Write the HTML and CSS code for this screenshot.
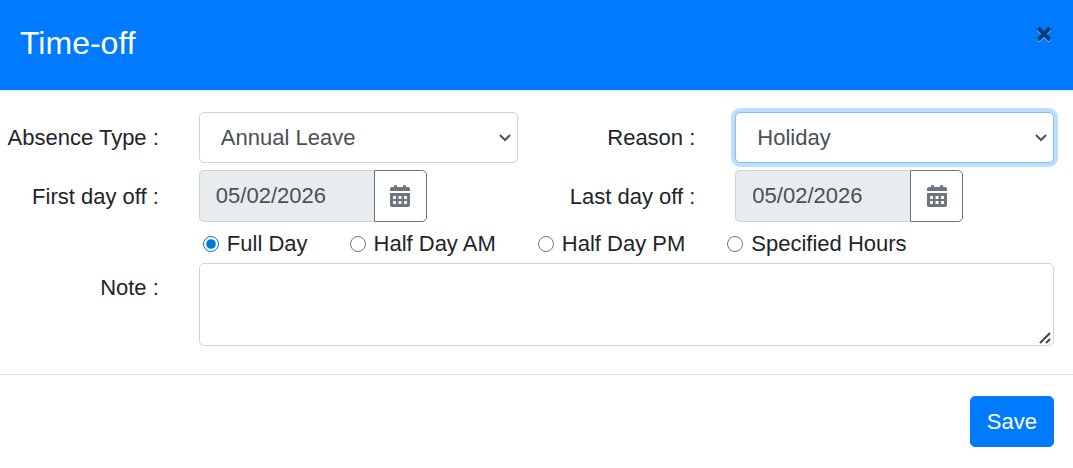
FILE: index.html
```
<!DOCTYPE html>
<html lang="en">
<head>
  <meta charset="UTF-8" />
  <meta name="viewport" content="width=device-width, initial-scale=1.0"/>
  <title>Time-off</title>
  <link rel="stylesheet" href="styles.css">
</head>
<body>

  <form class="modal-content">
    <header class="modal-header">
      <h1 class="modal-title">Time-off</h1>
      <button type="button" class="close" aria-label="Close">
        <svg class="close-icon" viewBox="0 0 18 18" aria-hidden="true">
          <path d="M3 3 15 15M15 3 3 15" />
        </svg>
      </button>
    </header>

    <div class="modal-body">
      <label class="form-label" for="absenceType">Absence Type :</label>
      <div class="form-field">
        <select class="form-control" id="absenceType">
          <option selected>Annual Leave</option>
        </select>
      </div>

      <label class="form-label" for="reason">Reason :</label>
      <div class="form-field">
        <select class="form-control" id="reason" autofocus>
          <option selected>Holiday</option>
        </select>
      </div>

      <label class="form-label" for="firstDay">First day off :</label>
      <div class="form-field date-group">
        <input type="text" class="form-control" id="firstDay" value="05/02/2026" readonly>
        <button type="button" class="date-btn" aria-label="Choose first day">
          <svg class="date-icon" viewBox="0 0 20 22" aria-hidden="true">
            <path fill-rule="evenodd" d="M4 1a1 1 0 0 1 1-1h1a1 1 0 0 1 1 1v1h6V1a1 1 0 0 1 1-1h1a1 1 0 0 1 1 1v1h2a2 2 0 0 1 2 2v2H0V4a2 2 0 0 1 2-2h2zM0 8h20v12a2 2 0 0 1-2 2H2a2 2 0 0 1-2-2zM3 11v3h3v-3zM8.500 11v3h3v-3zM14 11v3h3v-3zM3 16v3h3v-3zM8.500 16v3h3v-3zM14 16v3h3v-3z" />
          </svg>
        </button>
      </div>

      <label class="form-label" for="lastDay">Last day off :</label>
      <div class="form-field date-group">
        <input type="text" class="form-control" id="lastDay" value="05/02/2026" readonly>
        <button type="button" class="date-btn" aria-label="Choose last day">
          <svg class="date-icon" viewBox="0 0 20 22" aria-hidden="true">
            <path fill-rule="evenodd" d="M4 1a1 1 0 0 1 1-1h1a1 1 0 0 1 1 1v1h6V1a1 1 0 0 1 1-1h1a1 1 0 0 1 1 1v1h2a2 2 0 0 1 2 2v2H0V4a2 2 0 0 1 2-2h2zM0 8h20v12a2 2 0 0 1-2 2H2a2 2 0 0 1-2-2zM3 11v3h3v-3zM8.500 11v3h3v-3zM14 11v3h3v-3zM3 16v3h3v-3zM8.500 16v3h3v-3zM14 16v3h3v-3z" />
          </svg>
        </button>
      </div>

      <div class="form-field radio-group" role="radiogroup" aria-label="Duration">
        <label class="radio-label"><input type="radio" name="duration" checked>Full Day</label>
        <label class="radio-label"><input type="radio" name="duration">Half Day AM</label>
        <label class="radio-label"><input type="radio" name="duration">Half Day PM</label>
        <label class="radio-label"><input type="radio" name="duration">Specified Hours</label>
      </div>

      <label class="form-label note-label" for="note">Note :</label>
      <div class="form-field note-field">
        <textarea class="form-control" id="note" rows="2"></textarea>
      </div>
    </div>

    <footer class="modal-footer">
      <button type="submit" class="btn-save">Save</button>
    </footer>
  </form>

</body>
</html>
```
FILE: styles.css
```
* {
  box-sizing: border-box;
}

body {
  margin: 0;
  font-family: "Liberation Sans", Arial, sans-serif;
  font-size: 22px;
  line-height: 33px;
  color: #212529;
  background-color: #fff;
}

button, input, select, textarea {
  font: inherit;
}

.modal-header {
  display: flex;
  align-items: flex-start;
  justify-content: space-between;
  padding: 20px;
  color: #fff;
  background-color: #007bff;
  border-bottom: 1px solid #dee2e6;
}

.modal-title {
  margin: 0;
  font-size: 32px;
  font-weight: normal;
  line-height: 46px;
  padding-bottom: 4px;
}

.close {
  display: flex;
  padding: 5px 0;
  background: none;
  border: 0;
  opacity: 0.5;
  cursor: pointer;
}

.close-icon {
  width: 18px;
  height: 18px;
  fill: none;
  stroke: #000;
  stroke-width: 4;
  filter: drop-shadow(0 1px 0 #fff);
}

.modal-body {
  display: grid;
  grid-template-columns: minmax(0, 2fr) minmax(0, 4fr) minmax(0, 2fr) minmax(0, 4fr);
  align-items: center;
  row-gap: 7px;
  padding: 21px 0 28px;
}

.form-label {
  padding-right: 20px;
  text-align: right;
  white-space: nowrap;
}

.form-field {
  padding: 0 19px 0 20px;
}

.form-control {
  display: block;
  width: 100%;
  padding: 8px 16px;
  color: #495057;
  background-color: #fff;
  border: 1px solid #ced4da;
  border-radius: 5px;
}

select.form-control {
  height: 51px;
  padding-left: 21px;
  appearance: none;
  background-image: url("data:image/svg+xml,%3Csvg xmlns='http://www.w3.org/2000/svg' viewBox='0 0 14 10'%3E%3Cpath d='M2 2l5 5 5-5' fill='none' stroke='%23495057' stroke-width='2'/%3E%3C/svg%3E");
  background-repeat: no-repeat;
  background-position: right 5px center;
  background-size: 14px 10px;
}

.form-control:focus {
  border-color: #80bdff;
  outline: 0;
  box-shadow: 0 0 0 4px rgba(0, 123, 255, 0.25);
}

.form-control:read-only:not(select):not(textarea) {
  background-color: #e9ecef;
}

textarea.form-control {
  height: 83px;
}

textarea.form-control::-webkit-resizer {
  background: url("data:image/svg+xml,%3Csvg xmlns='http://www.w3.org/2000/svg' viewBox='0 0 15 15'%3E%3Cpath d='M2 13L12 3M8 13L12 9' fill='none' stroke='%23444' stroke-width='2'/%3E%3C/svg%3E") no-repeat center;
}

.date-group {
  display: flex;
}

.date-group .form-control {
  width: 175px;
  height: 52px;
  border-right: 0;
  border-radius: 5px 0 0 5px;
}

.date-btn {
  display: flex;
  align-items: center;
  justify-content: center;
  width: 53px;
  padding: 0;
  color: #6c757d;
  background-color: #fff;
  border: 1px solid #6c757d;
  border-radius: 0 5px 5px 0;
  cursor: pointer;
}

.date-icon {
  width: 20px;
  height: 22px;
  fill: currentColor;
}

.radio-group {
  grid-column: 2 / -1;
  display: flex;
  flex-wrap: wrap;
  gap: 0 42px;
  padding-top: 2px;
  padding-left: 24px;
  line-height: 25px;
}

.radio-label {
  display: flex;
  align-items: center;
  gap: 8px;
}

.radio-label input {
  width: 16px;
  height: 16px;
  margin: 0;
  accent-color: #0078d7;
}

.note-label {
  align-self: start;
  padding-top: 8px;
}

.note-field {
  grid-column: 2 / -1;
}

.modal-footer {
  display: flex;
  justify-content: flex-end;
  padding: 21px 19px 21px 20px;
  border-top: 1px solid #dee2e6;
}

.btn-save {
  padding: 8px 16px;
  color: #fff;
  background-color: #007bff;
  border: 1px solid #007bff;
  border-radius: 5px;
  cursor: pointer;
}
```
